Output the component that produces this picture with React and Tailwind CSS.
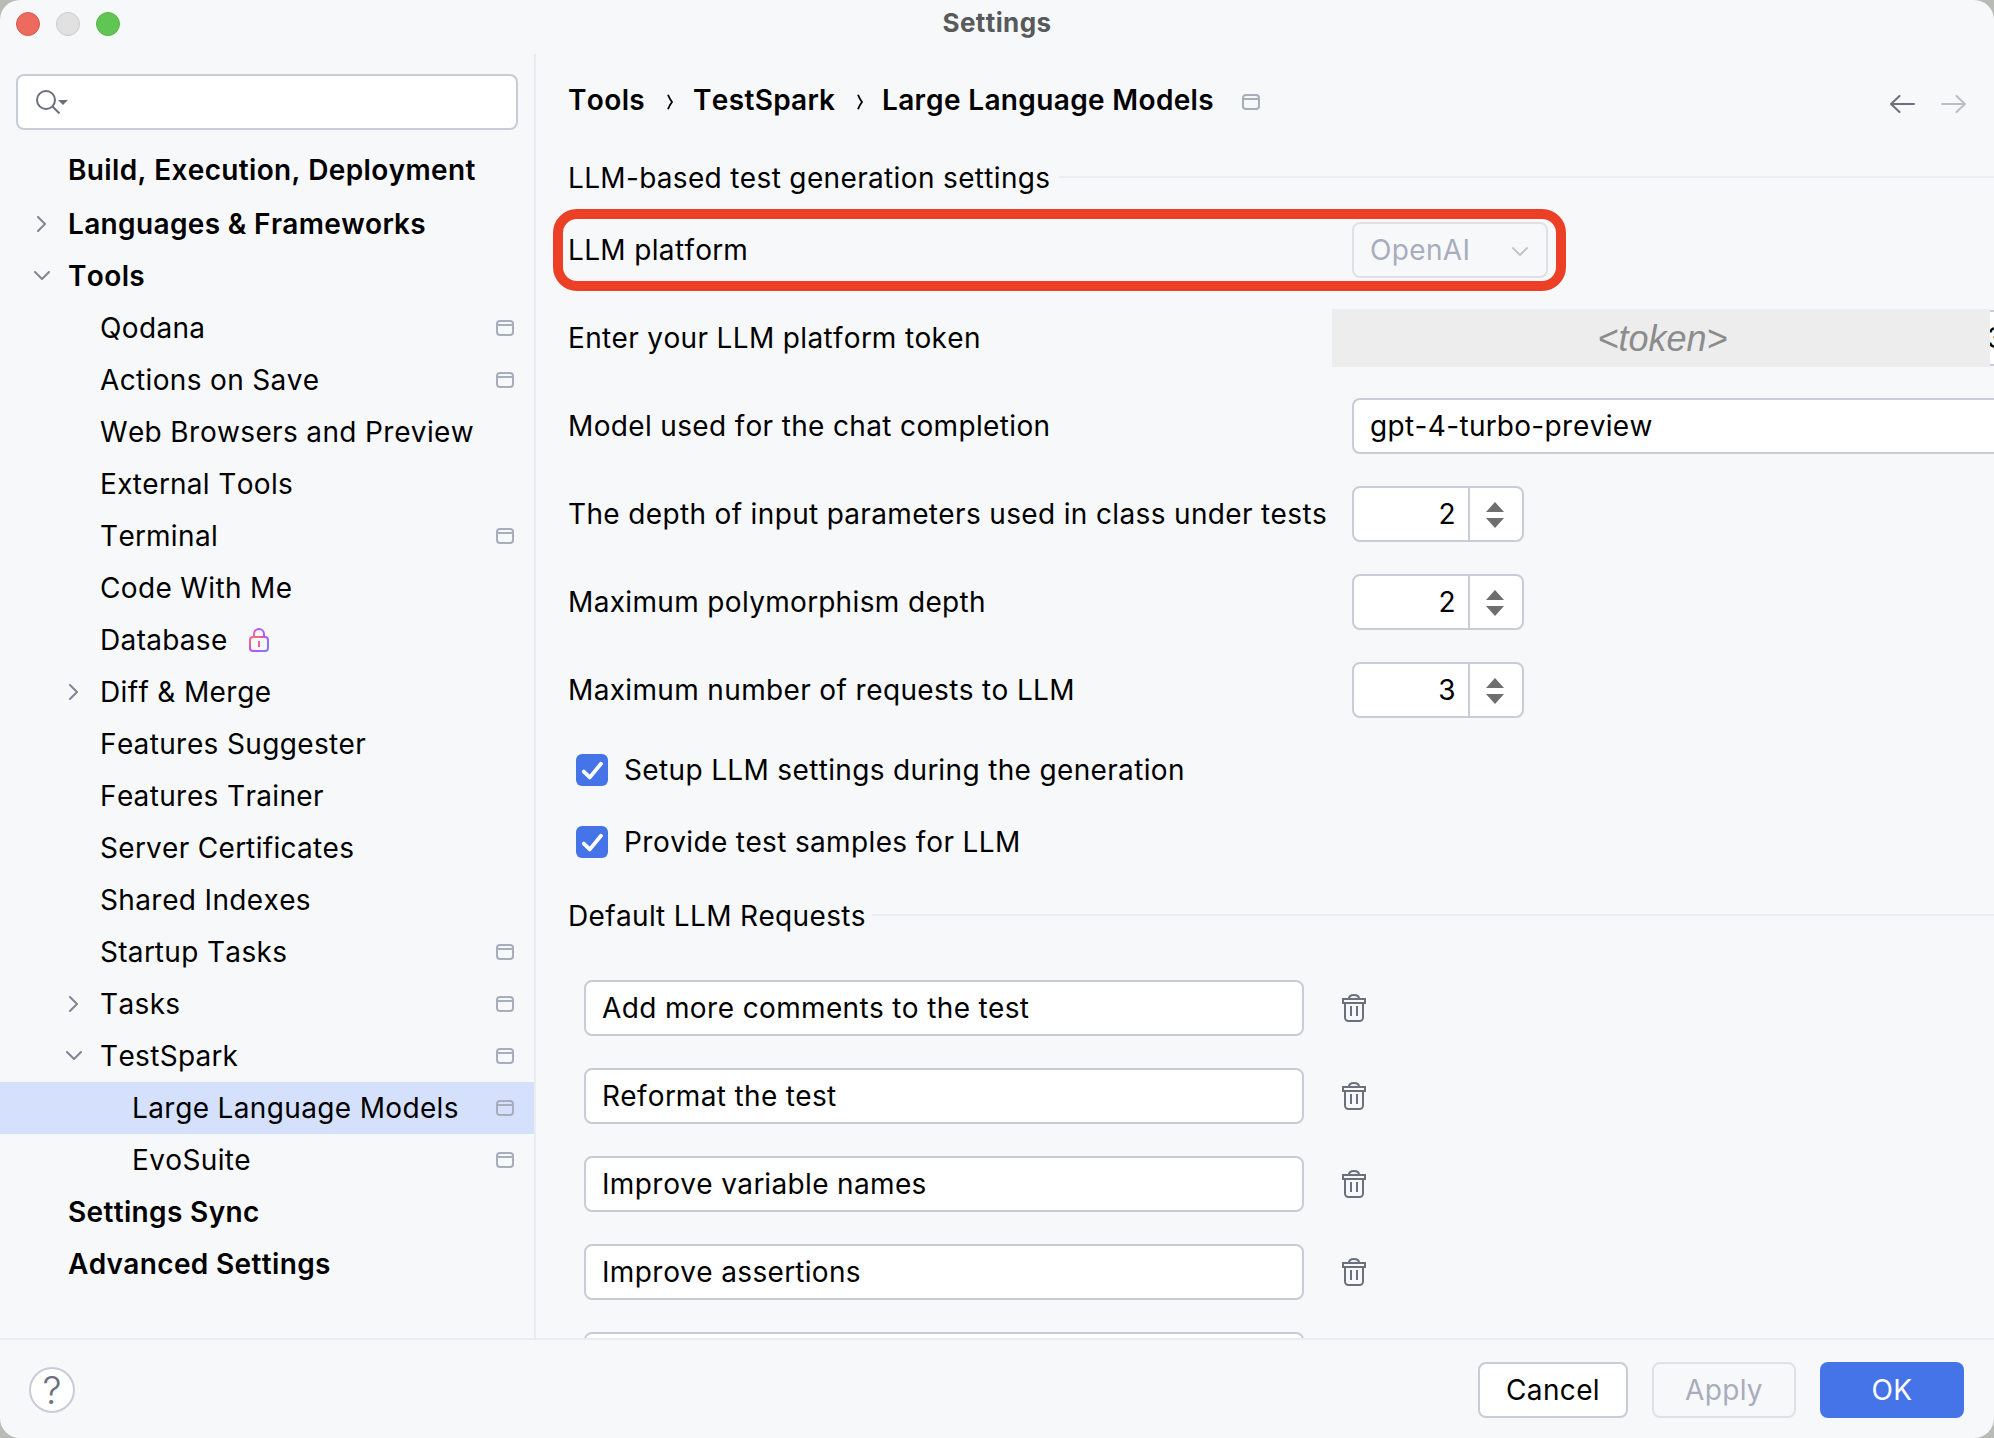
import React from "react";

const sidebarItems = [
  { label: "Languages & Frameworks", level: 0, arrow: "right" },
  { label: "Tools", level: 0, arrow: "down" },
  { label: "Qodana", level: 1, project: true },
  { label: "Actions on Save", level: 1, project: true },
  { label: "Web Browsers and Preview", level: 1 },
  { label: "External Tools", level: 1 },
  { label: "Terminal", level: 1, project: true },
  { label: "Code With Me", level: 1 },
  { label: "Database", level: 1, locked: true },
  { label: "Diff & Merge", level: 1, arrow: "right" },
  { label: "Features Suggester", level: 1 },
  { label: "Features Trainer", level: 1 },
  { label: "Server Certificates", level: 1 },
  { label: "Shared Indexes", level: 1 },
  { label: "Startup Tasks", level: 1, project: true },
  { label: "Tasks", level: 1, arrow: "right", project: true },
  { label: "TestSpark", level: 1, arrow: "down", project: true },
  { label: "Large Language Models", level: 2, project: true, selected: true },
  { label: "EvoSuite", level: 2, project: true },
  { label: "Settings Sync", level: 0 },
  { label: "Advanced Settings", level: 0 },
];

const requests = [
  "Add more comments to the test",
  "Reformat the test",
  "Improve variable names",
  "Improve assertions",
];

const arrowColumn = ["w-[68px] pl-[34px]", "w-[100px] pl-[66px]", "w-[132px] pl-[98px]"];

function ProjectIcon({ className = "" }) {
  return (
    <svg className={`h-4 w-[18px] shrink-0 ${className}`} viewBox="0 0 18 16" fill="none" stroke="#A8ADBD" strokeWidth="2">
      <rect x="1" y="1" width="16" height="14" rx="3" />
      <path d="M1 5h16" />
    </svg>
  );
}

function TreeArrow({ direction }) {
  return (
    <svg className="size-4" viewBox="0 0 16 16" fill="none" stroke="#818594" strokeWidth="2" strokeLinecap="round" strokeLinejoin="round">
      <path d={direction === "right" ? "M4 1l7 7-7 7" : "M1 4l7 7 7-7"} />
    </svg>
  );
}

function LockIcon() {
  return (
    <svg className="ml-[21px] h-6 w-5" viewBox="0 0 20 24" fill="none" strokeWidth="2">
      <defs>
        <radialGradient id="lock" gradientUnits="userSpaceOnUse" cx="6" cy="12" r="14">
          <stop offset="0" stopColor="#FA7A6B" />
          <stop offset="0.45" stopColor="#E85FA0" />
          <stop offset="0.75" stopColor="#C052F0" />
          <stop offset="1" stopColor="#8478FF" />
        </radialGradient>
      </defs>
      <g stroke="url(#lock)">
        <rect x="1" y="9" width="18" height="14" rx="3" />
        <path d="M5 9V6a5 5 0 0 1 10 0v3" />
        <path d="M10 13v6" />
      </g>
    </svg>
  );
}

function TrashIcon() {
  return (
    <svg className="ml-[38px] h-7 w-6" viewBox="0 0 24 28" fill="none" stroke="#6C707E" strokeWidth="2">
      <path d="M7 4.500C7 2.500 9 1 12 1s5 1.500 5 3.500" />
      <rect x="1" y="5" width="22" height="4" />
      <path d="M3 9v14.500a3.500 3.500 0 0 0 3.500 3.500h11a3.500 3.500 0 0 0 3.500-3.500V9" />
      <path d="M9 12v10M15 12v10" />
    </svg>
  );
}

function BreadcrumbArrow() {
  return (
    <svg className="mt-1 h-4 w-[6px]" viewBox="0 0 6 16" fill="none" stroke="black" strokeWidth="1.800">
      <path d="M1 0.800C2 3.500 3.500 6 5 8C3.500 10 2 12.500 1 15.200" />
    </svg>
  );
}

function SidebarRow({ item }) {
  return (
    <li className={`flex h-[52px] items-center pr-5 ${item.selected ? "bg-[#D5E0FC]" : ""}`}>
      <span className={`shrink-0 ${arrowColumn[item.level]}`}>{item.arrow && <TreeArrow direction={item.arrow} />}</span>
      <span className={`whitespace-nowrap ${item.level === 0 ? "font-semibold" : ""}`}>{item.label}</span>
      {item.locked && <LockIcon />}
      {item.project && <ProjectIcon className="ml-auto" />}
    </li>
  );
}

function SectionTitle({ width, children }) {
  return (
    <div className="flex items-center">
      <span className={`mt-[2px] shrink-0 whitespace-nowrap ${width}`}>{children}</span>
      <span className="h-[2px] flex-1 bg-[#EBECF0]" />
    </div>
  );
}

function FieldRow({ label, children }) {
  return (
    <div className="flex h-14 items-center">
      <span className="w-[784px] shrink-0 whitespace-nowrap">{label}</span>
      {children}
    </div>
  );
}

function Spinner({ value }) {
  return (
    <div className="flex h-14 w-[172px] overflow-hidden rounded-lg border-2 border-[#C9CCD6] bg-white">
      <span className="flex w-[114px] items-center justify-end pr-[12px]">{value}</span>
      <span className="flex flex-1 items-center justify-center border-l-2 border-[#C9CCD6] pt-[2px] pr-[2px]">
        <svg className="h-[26px] w-[18px]" viewBox="0 0 18 26" fill="#6E6E6E">
          <path d="M9 0l9 10H0z" />
          <path d="M9 26l9-10H0z" />
        </svg>
      </span>
    </div>
  );
}

function Checkbox({ label }) {
  return (
    <label className="ml-2 flex h-8 items-center gap-4">
      <span className="flex size-8 items-center justify-center rounded-[6px] bg-[#4574E8]">
        <svg className="size-8" viewBox="0 0 32 32" fill="none" stroke="white" strokeWidth="3.800" strokeLinecap="round" strokeLinejoin="round">
          <path d="M7.800 17.600l6 5.800L25 9.800" />
        </svg>
      </span>
      <span className="whitespace-nowrap">{label}</span>
    </label>
  );
}

export default function App() {
  return (
    <div className="h-[1438px] w-[1994px] overflow-hidden bg-[#B9BBB6] font-['Inter',sans-serif] text-[28px] leading-8 tracking-[0.35px] text-black [font-kerning:none]">
      <div className="flex h-full flex-col overflow-hidden rounded-[20px] bg-[#F7F8FA]">
        <header className="relative flex h-[54px] shrink-0 items-start gap-4 pt-3 pl-4">
          <span className="size-6 rounded-full border border-[#D9594E] bg-[#EC6A5E]" />
          <span className="size-6 rounded-full border border-[#CBCBCB] bg-[#E1E1E2]" />
          <span className="size-6 rounded-full border border-[#56B548] bg-[#61C554]" />
          <h1 className="absolute inset-x-0 top-[7px] text-center text-[26px] font-bold tracking-[0.4px] text-[#58595B]">Settings</h1>
        </header>

        <div className="flex min-h-0 flex-1">
          <aside className="w-[536px] shrink-0 border-r-2 border-[#EBECF0] pt-5">
            <div className="mr-4 ml-4 flex h-14 items-center rounded-lg border-2 border-[#C9CCD6] bg-white pl-[18px]">
              <svg className="h-6 w-8" viewBox="0 0 32 24" fill="none" stroke="#6C707E" strokeWidth="2">
                <circle cx="10" cy="10" r="9" />
                <path d="M16.500 16.500l7 7" />
                <path d="M22 10h10l-5 5z" fill="#6C707E" stroke="none" />
              </svg>
            </div>
            <div className="mt-[14px] mb-[2px] flex h-[52px] items-center pl-[68px] font-semibold whitespace-nowrap">Build, Execution, Deployment</div>
            <ul>
              {sidebarItems.map((item) => (
                <SidebarRow key={item.label} item={item} />
              ))}
            </ul>
          </aside>

          <main className="min-w-0 flex-1 overflow-hidden pl-8">
            <div className="mt-7 flex h-9 items-center font-semibold">
              <span className="w-[99px]">Tools</span>
              <BreadcrumbArrow />
              <span className="ml-5 w-[164px]">TestSpark</span>
              <BreadcrumbArrow />
              <span className="ml-[19px] whitespace-nowrap">Large Language Models</span>
              <ProjectIcon className="mt-1 ml-[28px]" />
              <svg className="mt-2 mr-7 ml-auto h-[18px] w-[76px]" viewBox="0 0 76 18" fill="none" strokeWidth="2" strokeLinecap="round" strokeLinejoin="round">
                <path d="M24 9H1M9.500 1L1 9l8.500 8" stroke="#6C707E" />
                <path d="M52 9h23M66.500 1L75 9l-8.500 8" stroke="#BDBEC2" />
              </svg>
            </div>

            <div className="mt-[42px]">
              <SectionTitle width="w-[491px]">LLM-based test generation settings</SectionTitle>
            </div>

            <div className="mt-7 flex flex-col gap-8">
              <div className="relative">
                <FieldRow label="LLM platform">
                  <div className="flex h-14 w-[196px] items-center justify-between rounded-lg border-2 border-[#DFE1E5] pr-[18px] pl-4 text-[#A8ADBD]">
                    OpenAI
                    <svg className="mt-1 size-4" viewBox="0 0 16 16" fill="none" stroke="#C4C5C8" strokeWidth="2" strokeLinecap="round" strokeLinejoin="round">
                      <path d="M1 4l7 7 7-7" />
                    </svg>
                  </div>
                </FieldRow>
                <div className="absolute -top-[13px] -left-[15px] h-[82px] w-[1013px] rounded-[24px] border-10 border-[#EB4025]" />
              </div>
              <div className="relative">
                <FieldRow label="Enter your LLM platform token">
                  <div className="flex h-14 flex-1 items-center justify-end overflow-hidden border-y-2 border-[#C9CCD6] bg-white">
                    <span className="w-[7px]">3</span>
                  </div>
                </FieldRow>
                <div className="absolute -top-[1px] left-[764px] flex h-[58px] w-[658px] items-center justify-center bg-[#EDEDED] pt-[2px] pl-[3px] font-['Liberation_Sans',sans-serif] text-[36px] tracking-normal text-[#8C8C8C] italic">
                  &lt;token&gt;
                </div>
              </div>
              <FieldRow label="Model used for the chat completion">
                <div className="flex h-14 flex-1 items-center rounded-l-lg border-2 border-r-0 border-[#C9CCD6] bg-white pl-4">gpt-4-turbo-preview</div>
              </FieldRow>
              <FieldRow label="The depth of input parameters used in class under tests">
                <Spinner value="2" />
              </FieldRow>
              <FieldRow label="Maximum polymorphism depth">
                <Spinner value="2" />
              </FieldRow>
              <FieldRow label="Maximum number of requests to LLM">
                <Spinner value="3" />
              </FieldRow>
            </div>

            <div className="mt-9 flex flex-col gap-10">
              <Checkbox label="Setup LLM settings during the generation" />
              <Checkbox label="Provide test samples for LLM" />
            </div>

            <div className="mt-10">
              <SectionTitle width="w-[304px]">Default LLM Requests</SectionTitle>
            </div>

            <div className="mt-12 ml-4 flex flex-col gap-8">
              {requests.map((request) => (
                <div key={request} className="flex items-center">
                  <div className="flex h-14 w-[720px] items-center rounded-lg border-2 border-[#C9CCD6] bg-white pl-4">{request}</div>
                  <TrashIcon />
                </div>
              ))}
              <div className="h-14 w-[720px] rounded-lg border-2 border-[#C9CCD6] bg-white" />
            </div>
          </main>
        </div>

        <footer className="flex h-[100px] shrink-0 items-start border-t-2 border-[#EBECF0] pt-[22px] pr-[30px] pl-[29px]">
          <button className="mt-[5px] flex size-[46px] items-center justify-center rounded-full border-2 border-[#C9CCD6] bg-white text-[38px] font-light tracking-normal text-[#6C707E]">?</button>
          <div className="ml-auto flex gap-6">
            <button className="h-14 w-[150px] rounded-lg border-2 border-[#C9CCD6] bg-white">Cancel</button>
            <button className="h-14 w-[144px] rounded-lg border-2 border-[#DFE1E5] text-[#A8ADBD]">Apply</button>
            <button className="h-14 w-[144px] rounded-lg bg-[#4574E8] text-white">OK</button>
          </div>
        </footer>
      </div>
    </div>
  );
}
